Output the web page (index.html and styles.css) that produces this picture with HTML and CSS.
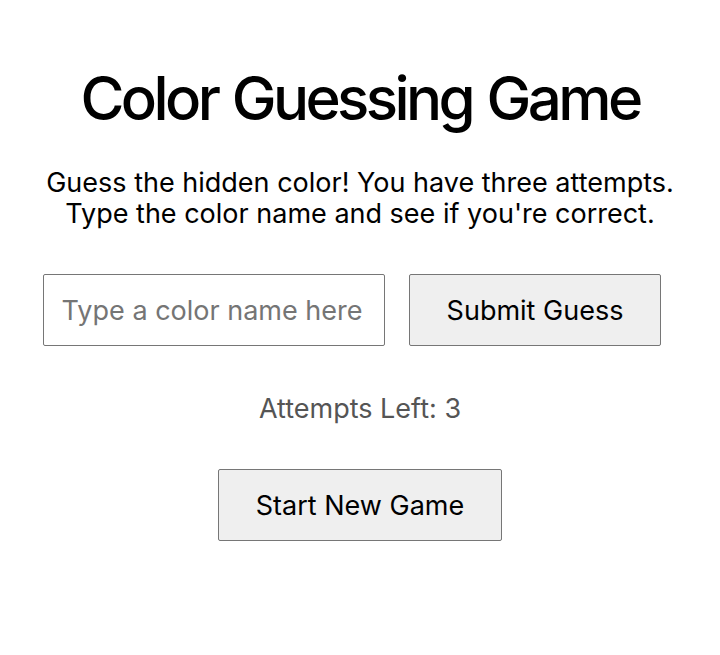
FILE: index.html
```html
<!DOCTYPE html>
<html lang="en">

<head>
  <meta charset="UTF-8">
  <meta name="viewport" content="width=device-width, initial-scale=1.0">
  <title>Color Guessing Game</title>
  <link rel="stylesheet" href="styles.css">
</head>

<body>
  <div class="game">
    <h1>Color Guessing Game</h1>
    <p class="intro">Guess the hidden color! You have three attempts.<br>Type the color name and see if you're correct.</p>

    <div class="guess-row">
      <input type="text" id="colorInput" placeholder="Type a color name here">
      <button type="button" id="submitGuess">Submit Guess</button>
    </div>

    <p class="attempts">Attempts Left: <span id="attemptsLeft">3</span></p>

    <button type="button" id="newGame">Start New Game</button>
  </div>
</body>

</html>
```

FILE: styles.css
```css
body {
  margin: 0;
  background-color: #fff;
  font-family: Inter, "Noto Sans", sans-serif;
  color: #000;
}

.game {
  display: flex;
  flex-direction: column;
  align-items: center;
  text-align: center;
  padding-top: 63px;
}

h1 {
  margin: 0;
  font-size: 60px;
  font-weight: 500;
  line-height: 70px;
  letter-spacing: -3.6px;
  word-spacing: 2px;
}

.intro {
  margin: 34px 0 0;
  font-size: 27px;
  line-height: 31px;
}

.guess-row {
  display: flex;
  margin-top: 45px;
}

input {
  width: 342px;
  height: 72px;
  margin-right: 8px;
  padding: 0 18px;
  box-sizing: border-box;
  border: 1px solid #767676;
  border-radius: 2px;
  font-family: inherit;
  font-size: 27px;
  color: #000;
}

input::placeholder {
  color: #757575;
}

button {
  height: 72px;
  margin: 0 16px;
  padding: 0 37px;
  box-sizing: border-box;
  border: 1px solid #767676;
  border-radius: 2px;
  background-color: #efefef;
  font-family: inherit;
  font-size: 27px;
  color: #000;
  cursor: pointer;
}

.attempts {
  margin: 47px 0 0;
  font-size: 27px;
  line-height: 31px;
  color: #555;
}

#newGame {
  margin-top: 45px;
}
```
